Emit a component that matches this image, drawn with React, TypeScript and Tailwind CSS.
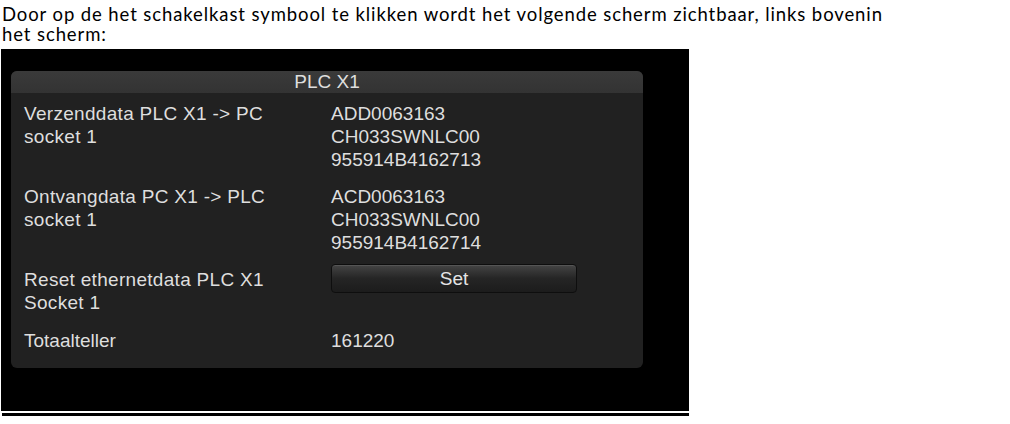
import React from 'react'

const rows = [
  {
    label: 'Verzenddata PLC X1 -> PC socket 1',
    values: ['ADD0063163', 'CH033SWNLC00', '955914B4162713'],
  },
  {
    label: 'Ontvangdata PC X1 -> PLC socket 1',
    values: ['ACD0063163', 'CH033SWNLC00', '955914B4162714'],
  },
]

export default function App() {
  return (
    <div className="w-[1010px] h-[424px] bg-white overflow-hidden">
      {/* document text above the screenshot */}
      <div className="pl-[2px] pt-[4px] text-[18.5px] leading-[20px] text-black font-['Lato',sans-serif] tracking-[0.9px] whitespace-nowrap">
        <div>Door op de het schakelkast symbool te klikken wordt het volgende scherm zichtbaar, links bovenin</div>
        <div>het scherm:</div>
      </div>

      <div className="ml-px mt-[5px] w-[688px] h-[362px] bg-black pt-[22px] pl-[10px]">
        <div className="w-[632px] rounded-[6px] bg-[#212121] overflow-hidden font-['Liberation_Sans',Arial,sans-serif] text-[19px] leading-[23px] text-[#dedede]">
          <div className="h-[22px] bg-gradient-to-b from-[#3a3a3a] to-[#333333] text-center leading-[22px]">
            PLC X1
          </div>

          <div className="pl-[13px] pt-[9px] pb-[16px] grid grid-cols-[270px_1fr] gap-x-[37px] gap-y-[14px]">
            {rows.map((row) => (
              <React.Fragment key={row.label}>
                <div className="tracking-[0.3px]">{row.label}</div>
                <div>
                  {row.values.map((v) => (
                    <div key={v + row.label}>{v}</div>
                  ))}
                </div>
              </React.Fragment>
            ))}

            <div className="tracking-[0.3px]">Reset ethernetdata PLC X1 Socket 1</div>
            <div className="-mt-[4px]">
              <button className="w-[246px] h-[29px] rounded-[4px] border border-[#0e0e0e] bg-gradient-to-b from-[#454545] via-[#252525] to-[#1c1c1c] text-[#e4e4e4] leading-[28px] shadow-[inset_0_1px_0_#555555]">
                Set
              </button>
            </div>

            <div className="pt-px">Totaalteller</div>
            <div className="pt-px">161220</div>
          </div>
        </div>
      </div>

      <div className="ml-[2px] mt-[2px] w-[687px] h-[3px] bg-black" />
    </div>
  )
}
